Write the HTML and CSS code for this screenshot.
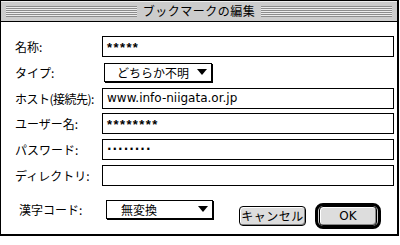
FILE: index.html
```html
<!DOCTYPE html>
<html lang="ja">
<head>
  <meta charset="UTF-8">
  <title>ブックマークの編集</title>
  <link rel="stylesheet" href="styles.css">
</head>
<body>
  <div class="window">
    <div class="titlebar">
      <div class="stripes"></div>
      <div class="title">ブックマークの編集</div>
      <div class="stripes"></div>
    </div>
    <div class="content">
      <div class="row">
        <div class="label">名称:</div>
        <div class="field stars">*****</div>
      </div>
      <div class="row row_popup">
        <div class="label">タイプ:</div>
        <div class="popup">どちらか不明<i></i></div>
      </div>
      <div class="row row_host">
        <div class="label label_tight">ホスト(接続先):</div>
        <div class="field">www.info-niigata.or.jp</div>
      </div>
      <div class="row">
        <div class="label">ユーザー名:</div>
        <div class="field stars">********</div>
      </div>
      <div class="row">
        <div class="label">パスワード:</div>
        <div class="field dots">········</div>
      </div>
      <div class="row">
        <div class="label">ディレクトリ:</div>
        <div class="field"></div>
      </div>
      <!-- 下の行 -->
      <div class="footer">
        <div class="label">漢字コード:</div>
        <div class="popup kanji">無変換<i></i></div>
        <div class="btn cancel">キャンセル</div>
        <div class="ok_ring"><div class="btn ok">OK</div></div>
      </div>
    </div>
  </div>
</body>
</html>
```

FILE: styles.css
```css
* {
  margin: 0;
  padding: 0;
  box-sizing: border-box;
}
body {
  background: #fff;
  font-family: "Noto Sans CJK JP", "Noto Sans", sans-serif;
  font-size: 12px;
  color: #000;
}
.window {
  width: 399px;
  height: 236px;
  border: 1px solid #000;
  border-right-width: 2px;
  border-bottom-width: 2px;
  background: #fff;
}
.titlebar {
  display: flex;
  align-items: center;
  height: 21px;
  padding: 0 5px;
  background: #cccccc;
  border-bottom: 1px solid #000;
  border-top: 1px solid #eee;
}
.stripes {
  flex: 1;
  height: 11px;
  background: repeating-linear-gradient(#8c8c8c 0 1px, #ececec 1px 2px);
}
.title {
  padding: 0 6px 1px;
  line-height: 16px;
  font-size: 12px;
  letter-spacing: 0.5px;
}
.content {
  padding: 14px 3px 0 14px;
}
.row {
  display: flex;
  align-items: center;
  height: 21px;
  margin-bottom: 5px;
}
.row_popup {
  margin-top: 1px;
}
.row_host {
  margin-bottom: 4px;
}
.label {
  width: 87px;
  white-space: nowrap;
}
.label_tight {
  letter-spacing: -0.5px;
}
.field {
  flex: 1;
  height: 21px;
  border: 1px solid #000;
  padding-left: 4px;
  line-height: 19px;
  font-family: "DejaVu Sans", sans-serif;
  font-size: 12px;
  overflow: hidden;
}
.stars {
  font-family: "Liberation Sans", sans-serif;
  font-size: 13px;
  font-weight: bold;
  letter-spacing: 1.4px;
  line-height: 21px;
}
.dots {
  letter-spacing: 1px;
  font-weight: bold;
}
.popup {
  position: relative;
  width: 108px;
  height: 19px;
  margin-left: 2px;
  border: 1px solid #000;
  box-shadow: 1px 1px 0 #000;
  padding-left: 12px;
  line-height: 17px;
  background: #fff;
}
.popup i {
  position: absolute;
  right: 4px;
  top: 5px;
  width: 0;
  height: 0;
  border-left: 5px solid transparent;
  border-right: 5px solid transparent;
  border-top: 6px solid #000;
}
.footer {
  display: flex;
  align-items: flex-start;
  margin-top: 13px;
  padding-left: 4px;
}
.footer .label {
  width: 85px;
  margin-top: 2px;
  line-height: 17px;
}
.kanji {
  width: 107px;
  margin-top: 1px;
  padding-left: 14px;
}
.btn {
  height: 20px;
  border: 1px solid #000;
  border-radius: 4px;
  background: #dddddd;
  box-shadow: inset 1px 1px 0 #fff, inset -1px -1px 0 #888;
  text-align: center;
  line-height: 18px;
}
.cancel {
  width: 67px;
  margin-top: 7px;
  margin-left: 26px;
  letter-spacing: 0.5px;
}
.ok_ring {
  display: flex;
  align-items: center;
  justify-content: center;
  width: 66px;
  height: 26px;
  margin-top: 4px;
  margin-left: 9px;
  border: 3px solid #000;
  border-radius: 8px;
  background: #ccc;
}
.ok {
  width: 58px;
  font-family: "DejaVu Sans", sans-serif;
}
```
